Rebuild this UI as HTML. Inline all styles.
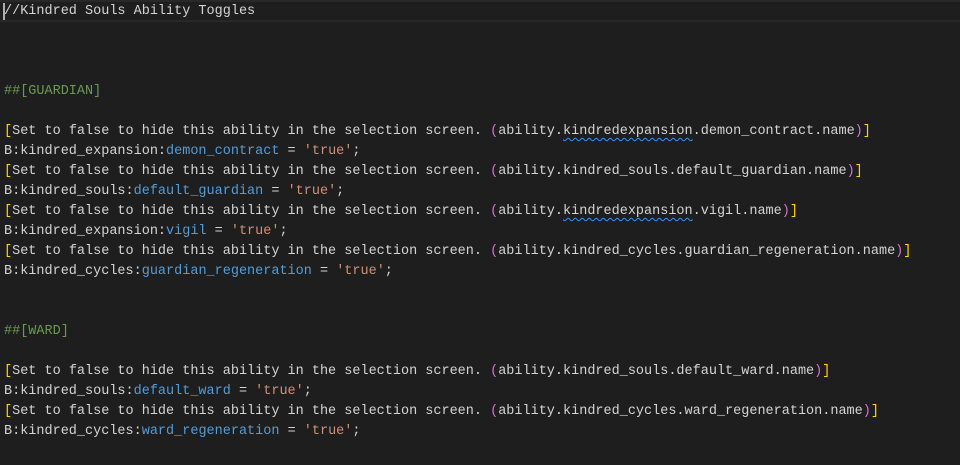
<!DOCTYPE html>
<html><head><meta charset="utf-8"><style>
html,body{margin:0;padding:0;background:#1e1e1e;width:960px;height:465px;overflow:hidden}
.ed{font-family:"Liberation Mono",monospace;font-size:13.5px;color:#d4d4d4;position:relative;padding-top:2px}
.l{height:20px;line-height:20px;padding-left:4px;white-space:pre}
.cur{margin-top:-2px;border-top:2px solid #282828;border-bottom:2px solid #282828;height:18px;line-height:20px;position:relative}
.cur:before{content:"";position:absolute;left:3px;top:1px;width:2px;height:17px;background:#aeafad}
.c{color:#6a9955}.b{color:#569cd6}.s{color:#ce9178}.y{color:#ffd700}.p{color:#da70d6}
.w{text-decoration:underline wavy #3794ff;text-decoration-thickness:1px;text-underline-offset:3px}
</style></head><body><div class="ed"><div class="l cur">//Kindred Souls Ability Toggles</div><div class="l"> </div><div class="l"> </div><div class="l"> </div><div class="l"><span class="c">##[GUARDIAN]</span></div><div class="l"> </div><div class="l"><span class="y">[</span>Set to false to hide this ability in the selection screen. <span class="p">(</span>ability.<span class="w">kindredexpansion</span>.demon_contract.name<span class="p">)</span><span class="y">]</span></div><div class="l">B:kindred_expansion:<span class="b">demon_contract</span> = <span class="s">'true'</span>;</div><div class="l"><span class="y">[</span>Set to false to hide this ability in the selection screen. <span class="p">(</span>ability.kindred_souls.default_guardian.name<span class="p">)</span><span class="y">]</span></div><div class="l">B:kindred_souls:<span class="b">default_guardian</span> = <span class="s">'true'</span>;</div><div class="l"><span class="y">[</span>Set to false to hide this ability in the selection screen. <span class="p">(</span>ability.<span class="w">kindredexpansion</span>.vigil.name<span class="p">)</span><span class="y">]</span></div><div class="l">B:kindred_expansion:<span class="b">vigil</span> = <span class="s">'true'</span>;</div><div class="l"><span class="y">[</span>Set to false to hide this ability in the selection screen. <span class="p">(</span>ability.kindred_cycles.guardian_regeneration.name<span class="p">)</span><span class="y">]</span></div><div class="l">B:kindred_cycles:<span class="b">guardian_regeneration</span> = <span class="s">'true'</span>;</div><div class="l"> </div><div class="l"> </div><div class="l"><span class="c">##[WARD]</span></div><div class="l"> </div><div class="l"><span class="y">[</span>Set to false to hide this ability in the selection screen. <span class="p">(</span>ability.kindred_souls.default_ward.name<span class="p">)</span><span class="y">]</span></div><div class="l">B:kindred_souls:<span class="b">default_ward</span> = <span class="s">'true'</span>;</div><div class="l"><span class="y">[</span>Set to false to hide this ability in the selection screen. <span class="p">(</span>ability.kindred_cycles.ward_regeneration.name<span class="p">)</span><span class="y">]</span></div><div class="l">B:kindred_cycles:<span class="b">ward_regeneration</span> = <span class="s">'true'</span>;</div></div></body></html>
